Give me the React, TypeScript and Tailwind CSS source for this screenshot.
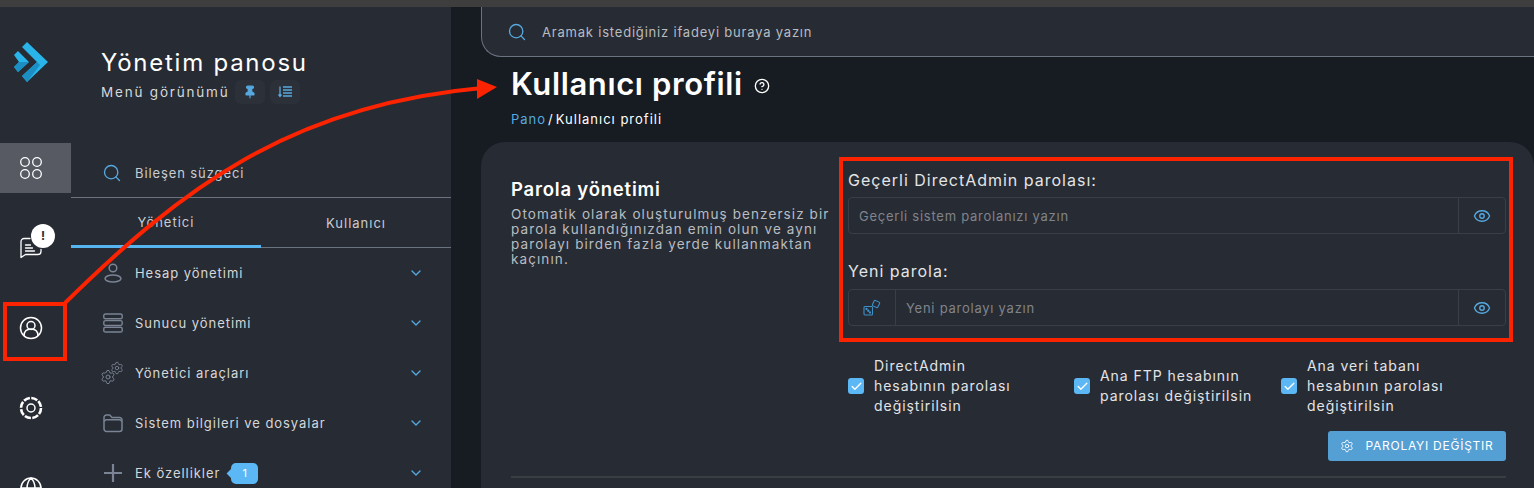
import React from "react";
import { Search, Pin, Eye, ChevronDown, Check, Settings, Globe, CircleHelp } from "lucide-react";

const font = "font-['Inter','Liberation_Sans',sans-serif]";

const Logo = () => (
  <svg width="40" height="44" viewBox="12 42 40 44">
    <polygon points="27,43 48,63 27,83 22,77 37,63 22,48" fill="#29b5ea" />
    <polygon points="27,83 22,77 37,63 40,66" fill="#1b8fc4" />
    <polygon points="18,52 29,63 18,73 14,68 19,63 14,56" fill="#29b5ea" />
    <polygon points="18,73 14,68 19,63 29,63" fill="#1b8fc4" />
  </svg>
);

const Tiles = () => (
  <svg width="22" height="22" viewBox="0 0 22 22" fill="none" stroke="#fff" strokeWidth="1.3">
    <circle cx="5" cy="5" r="4.300" />
    <circle cx="17" cy="5" r="4.300" />
    <circle cx="5" cy="17" r="4.300" />
    <circle cx="17" cy="17" r="4.300" />
  </svg>
);

const Chat = () => (
  <svg width="24" height="24" viewBox="0 0 24 24" fill="none" stroke="#fff" strokeWidth="1.3" strokeLinecap="round" strokeLinejoin="round">
    <path d="M11 2.500H5a3 3 0 0 0-3 3v16l4.500-3H19a3 3 0 0 0 3-3v-2" />
    <path d="M6.500 9h5M6.500 12h7M6.500 15h9" />
  </svg>
);

const UserRound = () => (
  <svg width="24" height="24" viewBox="0 0 24 24" fill="none" stroke="#fff" strokeWidth="1.500">
    <circle cx="12" cy="12" r="10.500" />
    <circle cx="12" cy="9.500" r="4" />
    <path d="M5 20c0-5 3-7 7-7s7 2 7 7" />
  </svg>
);

const GearRing = () => (
  <svg width="24" height="24" viewBox="0 0 24 24" fill="none" stroke="#fff">
    <circle cx="12" cy="12" r="10" strokeWidth="2.600" strokeDasharray="6.400 1.450" />
    <circle cx="12" cy="12" r="4" strokeWidth="1.500" />
  </svg>
);

const Person = () => (
  <svg width="20" height="20" viewBox="0 0 20 20" fill="none" stroke="#7a8494" strokeWidth="1.5">
    <circle cx="10" cy="5" r="3.800" />
    <ellipse cx="10" cy="15.500" rx="8" ry="3.600" />
  </svg>
);

const Server = () => (
  <svg width="20" height="20" viewBox="0 0 20 20" fill="none" stroke="#7a8494" strokeWidth="1.4">
    <rect x="0.800" y="1" width="18.400" height="4.800" rx="1.600" />
    <rect x="0.800" y="7.600" width="18.400" height="4.800" rx="1.600" />
    <rect x="0.800" y="14.200" width="18.400" height="4.800" rx="1.600" />
  </svg>
);

const Gears = () => (
  <span className="relative block w-[24px] h-[24px] -ml-[2px] shrink-0">
    <Settings size={16} strokeWidth={1.5} color="#7a8494" className="absolute left-0 bottom-0" />
    <Settings size={14} strokeWidth={1.5} color="#7a8494" className="absolute right-0 top-0" />
  </span>
);

const Folder = () => (
  <svg width="20" height="20" viewBox="0 0 20 20" fill="none" stroke="#7a8494" strokeWidth="1.5" strokeLinejoin="round">
    <path d="M1 4.500A2.500 2.500 0 0 1 3.500 2h3.200l2.300 2.400h7.500A2.500 2.500 0 0 1 19 7v9a2.500 2.500 0 0 1-2.500 2.500h-13A2.500 2.500 0 0 1 1 16z" />
    <path d="M1.500 8.500A2 2 0 0 1 3.500 6.800h13a2 2 0 0 1 2 1.700" />
  </svg>
);

const PlusBig = () => (
  <svg width="20" height="20" viewBox="0 0 20 20" fill="none" stroke="#7a8494" strokeWidth="2.2">
    <path d="M10 1v18M1 10h18" />
  </svg>
);

const SortList = () => (
  <svg width="14" height="14" viewBox="0 0 14 14" fill="none" stroke="#56a9e0" strokeWidth="1.3">
    <path d="M5 2h9M5 5h9M5 8h9M5 11h9" />
    <path d="M2 1.500v10M0.500 9.500 2 11.500l1.500-2" />
  </svg>
);

const DiceIcon = () => (
  <svg width="18" height="18" viewBox="0 0 18 18" fill="none" stroke="#3f8fc8" strokeWidth="1.100">
    <rect x="1" y="7.500" width="8.500" height="8.500" rx="1" />
    <rect x="10" y="2" width="6" height="6" rx="1" transform="rotate(25 13 5)" />
    <circle cx="3.500" cy="10" r="0.600" fill="#3f8fc8" />
    <circle cx="7" cy="13.500" r="0.600" fill="#3f8fc8" />
    <circle cx="5.250" cy="11.750" r="0.600" fill="#3f8fc8" />
  </svg>
);

const menu = [
  { label: "Hesap yönetimi", icon: <Person /> },
  { label: "Sunucu yönetimi", icon: <Server /> },
  { label: "Yönetici araçları", icon: <Gears /> },
  { label: "Sistem bilgileri ve dosyalar", icon: <Folder /> },
  { label: "Ek özellikler", icon: <PlusBig />, badge: "1" },
];

const Rail = () => (
  <div className="w-[71px] shrink-0 flex flex-col bg-[#272b33]">
    <div className="h-[136px] pt-[34px] pl-[12px] shrink-0">
      <Logo />
    </div>
    <div className="w-full h-[50px] shrink-0 bg-[#575a63] flex items-center pl-[20px]">
      <Tiles />
    </div>
    <div className="h-[80px] w-full shrink-0 pt-[43px] pl-[19px] relative">
      <Chat />
      <span className="absolute left-[31px] top-[31px] w-[24px] h-[24px] rounded-full bg-white text-[#272b33] text-[12px] font-bold flex items-center justify-center">!</span>
    </div>
    <div className="h-[80px] shrink-0 pt-[43px] pl-[19px]">
      <UserRound />
    </div>
    <div className="h-[80px] shrink-0 pt-[43px] pl-[19px]">
      <GearRing />
    </div>
    <div className="h-[80px] shrink-0 pt-[43px] pl-[19px]">
      <Globe size={24} strokeWidth={1.5} color="#fff" />
    </div>
  </div>
);

const Sidebar = () => (
  <aside className="w-[380px] shrink-0 bg-[#272b33] flex flex-col">
    <div className="h-[137px] shrink-0 pl-[30px] pt-[39px]">
      <h2 className="text-[24px] leading-[34px] tracking-[1.75px] text-white">Yönetim panosu</h2>
      <div className="flex items-center">
        <span className="text-[13.5px] tracking-[1.8px] text-[#d5d7da] w-[134px] whitespace-nowrap">Menü görünümü</span>
        <span className="w-[30px] h-[24px] rounded-[6px] bg-[#2c3039] flex items-center justify-center">
          <Pin size={14} color="#56a9e0" fill="#56a9e0" />
        </span>
        <span className="ml-[5px] w-[30px] h-[24px] rounded-[6px] bg-[#2c3039] flex items-center justify-center">
          <SortList />
        </span>
      </div>
    </div>
    <div className="h-[54px] shrink-0 flex items-center pl-[31px] pt-[4px] border-b border-[#6b7280]">
      <Search size={20} color="#56a9e0" strokeWidth={1.6} />
      <span className="ml-[13px] pt-[2px] text-[13px] tracking-[0.9px] text-[#c9ccd1]">Bileşen süzgeci</span>
    </div>
    <div className="h-[50px] shrink-0 flex border-b border-[#6b7280]">
      <div className="w-[190px] h-[50px] flex items-center justify-center pt-[2px] border-b-[3px] border-[#56b4ee] text-[13px] tracking-[1px] text-[#c9ccd1]">Yönetici</div>
      <div className="w-[190px] h-[49px] flex items-center justify-center pt-[2px] text-[13px] tracking-[1px] text-[#c9ccd1]">Kullanıcı</div>
    </div>
    <div className="flex flex-col">
      {menu.map((item) => (
        <div key={item.label} className="h-[50px] shrink-0 flex items-center pl-[32px] pr-[27px]">
          <span className="w-[20px] h-[24px] flex items-center justify-center shrink-0">{item.icon}</span>
          <span className="ml-[12px] pt-[2px] text-[13px] tracking-[0.95px] text-[#d5d7da]">{item.label}</span>
          {item.badge && (
            <span className="relative ml-[11px] w-[27px] h-[21px] rounded-[5px] bg-[#5bb8f5] text-white text-[11px] flex items-center justify-center">
              <span className="absolute -left-[3px] top-[7px] w-[7px] h-[7px] rotate-45 bg-[#5bb8f5]" />
              <span className="relative">{item.badge}</span>
            </span>
          )}
          <ChevronDown size={16} color="#56a9e0" strokeWidth={2} className="ml-auto" />
        </div>
      ))}
    </div>
  </aside>
);

const PasswordInput = ({ placeholder, dice }: { placeholder: string; dice?: boolean }) => (
  <div className="h-[37px] flex rounded-[4px] border border-[#393e49]">
    {dice && (
      <span className="w-[47px] shrink-0 flex items-center justify-center border-r border-[#393e49]">
        <DiceIcon />
      </span>
    )}
    <input
      readOnly
      placeholder={placeholder}
      className="flex-1 min-w-0 px-[10px] pt-[3px] bg-transparent text-[13px] tracking-[0.75px] outline-none placeholder:text-[#80848b]"
    />
    <span className="w-[47px] shrink-0 flex items-center justify-center border-l border-[#393e49]">
      <Eye size={18} strokeWidth={1.8} color="#56a9e0" />
    </span>
  </div>
);

const CheckOption = ({ lines, width }: { lines: string[]; width: string }) => (
  <label className={`flex items-center shrink-0 ${width}`}>
    <span className="w-[16px] h-[16px] rounded-[3px] bg-[#5bb8f5] flex items-center justify-center shrink-0">
      <Check size={13} strokeWidth={2.5} color="#fff" />
    </span>
    <span className="ml-[10px] text-[14px] leading-[20px] tracking-[0.95px] text-[#e3e4e6]">
      {lines.map((l) => (
        <span key={l} className="block whitespace-nowrap">{l}</span>
      ))}
    </span>
  </label>
);

const Annotations = () => (
  <svg className="absolute inset-0 pointer-events-none" width="1534" height="488" viewBox="0 0 1534 488" fill="none">
    <rect x="841" y="159" width="670" height="181" stroke="#fb2300" strokeWidth="4" />
    <rect x="5" y="304" width="60" height="55" stroke="#fb2300" strokeWidth="4" />
    <path d="M65 303C180 190 290 105 482 88" stroke="#fb2300" strokeWidth="4" />
    <polygon points="497,87 477,79 477,99" fill="#fb2300" />
  </svg>
);

export default function App() {
  return (
    <div className={`relative w-[1534px] h-[488px] overflow-hidden flex flex-col bg-[#171b22] ${font}`}>
      <div className="h-[7px] shrink-0 bg-[#3e3e3e]" />
      <div className="flex flex-1 min-h-0">
        <Rail />
        <Sidebar />
        <main className="flex-1 min-w-0 pl-[30px] flex flex-col">
          <div className="h-[50px] shrink-0 -mr-[30px] flex items-center pl-[25px] pt-[1px] bg-[#272b33] border-l border-b border-[#6b7280] rounded-bl-[20px]">
            <Search size={20} color="#56a9e0" strokeWidth={1.6} />
            <span className="ml-[15px] pt-[2px] text-[13px] tracking-[0.8px] text-[#b9bcc1]">Aramak istediğiniz ifadeyi buraya yazın</span>
          </div>
          <div className="h-[85px] shrink-0 pl-[30px] pt-[7px]">
            <div className="flex items-center">
              <h1 className="text-[31px] leading-[40px] font-semibold tracking-[0.62px] text-white">Kullanıcı profili</h1>
              <CircleHelp size={16} strokeWidth={2} color="#fff" className="ml-[11px] mt-[3px]" />
            </div>
            <div className="mt-[5px] text-[13px] leading-[20px] tracking-[1px] text-white">
              <span className="text-[#56a9e0]">Pano</span>
              <span className="mx-[2px]">/</span>
              <span>Kullanıcı profili</span>
            </div>
          </div>
          <section className="flex-1 min-h-0 rounded-t-[24px] bg-[#272b33] pl-[30px] pr-[28px] pt-[30px]">
            <div className="flex">
              <div className="w-[337px] shrink-0 pt-[4px]">
                <h3 className="text-[18.5px] leading-[26px] font-semibold tracking-[0.8px] text-white">Parola yönetimi</h3>
                <p className="mt-[5px] text-[13.5px] leading-[15px] tracking-[1.1px] text-[#b9bcc1] whitespace-nowrap">
                  Otomatik olarak oluşturulmuş benzersiz bir<br />
                  parola kullandığınızdan emin olun ve aynı<br />
                  parolayı birden fazla yerde kullanmaktan<br />
                  kaçının.
                </p>
              </div>
              <div className="flex-1 min-w-0">
                <label className="block text-[16px] leading-[26px] tracking-[1px] text-[#e3e4e6] -mt-[5px] mb-[4px]">Geçerli DirectAdmin parolası:</label>
                <PasswordInput placeholder="Geçerli sistem parolanızı yazın" />
                <label className="block text-[16px] leading-[26px] tracking-[1px] text-[#e3e4e6] mt-[24px] mb-[5px]">Yeni parola:</label>
                <PasswordInput placeholder="Yeni parolayı yazın" dice />
                <div className="flex items-center mt-[30px]">
                  <CheckOption width="w-[226px]" lines={["DirectAdmin", "hesabının parolası", "değiştirilsin"]} />
                  <CheckOption width="w-[207px]" lines={["Ana FTP hesabının", "parolası değiştirilsin"]} />
                  <CheckOption width="w-[225px]" lines={["Ana veri tabanı", "hesabının parolası", "değiştirilsin"]} />
                </div>
                <div className="flex justify-end mt-[15px]">
                  <button className="w-[178px] h-[30px] rounded-[3px] bg-[#54a0d4] flex items-center justify-center gap-[11px] text-[12px] tracking-[0.75px] text-white">
                    <Settings size={14} strokeWidth={1.5} />
                    PAROLAYI DEĞİŞTIR
                  </button>
                </div>
              </div>
            </div>
            <div className="mt-[15px] h-[2px] bg-[#3a3d42]" />
          </section>
        </main>
      </div>
      <Annotations />
    </div>
  );
}
